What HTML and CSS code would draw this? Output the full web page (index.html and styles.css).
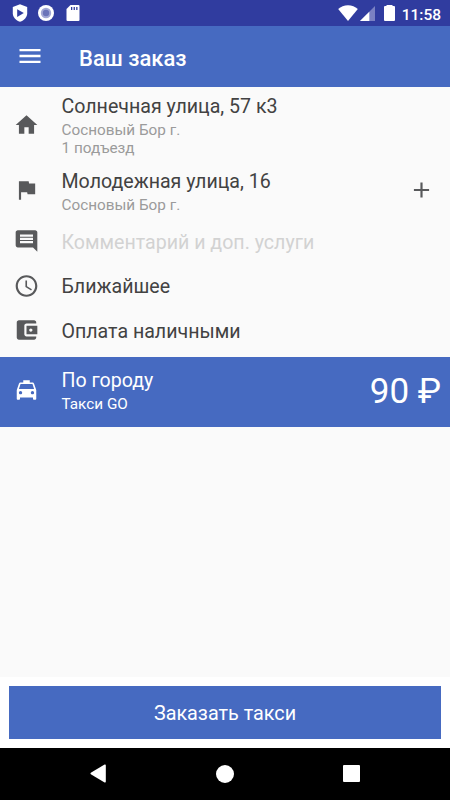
FILE: index.html
```html
<!DOCTYPE html>
<html lang="ru">
<head>
    <meta charset="UTF-8">
    <meta name="viewport" content="width=device-width, initial-scale=1.0">
    <title>Ваш заказ</title>
    <link rel="stylesheet" href="styles.css">
</head>
<body>
    <div class="status-bar">
        <svg class="shield" width="16" height="18" viewBox="0 0 16 18"><path fill="#fff" d="M8 .3l7.200 2.600v6.300c0 4-3 7.200-7.200 8.500C3.800 16.400.8 13.200.8 9.200V2.900z"/><path fill="#303c9f" d="M5.200 5.200v7.800L11.800 9.100z"/></svg>
        <svg class="record" width="16" height="16" viewBox="0 0 16 16"><circle cx="8" cy="8" r="8" fill="#fff"/><circle cx="8" cy="8" r="5.200" fill="#a3a8d5"/><circle cx="8" cy="8" r="3.200" fill="#6b74b9"/></svg>
        <svg class="sd-card" width="14" height="16" viewBox="0 0 14 16"><path fill="#fff" d="M4.500 0H12.500Q13.500 0 13.500 1V15Q13.500 16 12.500 16H1.500Q.5 16 .5 15V4z"/><path fill="#303c9f" d="M5 2h1.300v3H5zM7.600 2h1.300v3H7.600zM10.200 2h1.300v3h-1.300z"/></svg>
        <div class="status-right">
            <svg class="wifi" width="20" height="16" viewBox="0 0 20 16"><path fill="#fff" d="M10 16L.2 4C2.800 1.500 6.200.2 10 .2s7.200 1.300 9.800 3.800z"/></svg>
            <svg class="signal" width="15" height="15" viewBox="0 0 15 15"><path fill="#7a81c3" d="M15 0v15H0z"/><path fill="#fff" d="M9.300 5.700V15H0z"/></svg>
            <svg class="battery" width="11" height="16" viewBox="0 0 11 16"><path fill="#fff" d="M2.500 0h6v1H10q1 0 1 1V15q0 1-1 1H1q-1 0-1-1V2q0-1 1-1h1.500z"/></svg>
            <span class="time">11:58</span>
        </div>
    </div>

    <div class="toolbar">
        <svg class="menu" width="28" height="28" viewBox="0 0 24 24"><path fill="#fff" d="M3 18h18v-2H3v2zm0-5h18v-2H3v2zm0-7v2h18V6H3z"/></svg>
        <h1>Ваш заказ</h1>
    </div>

    <div class="order">
        <div class="row row-from">
            <svg class="icon" viewBox="0 0 24 24"><path d="M10 20v-6h4v6h5v-8h3L12 3 2 12h3v8z"/></svg>
            <div class="text">
                <div class="title">Солнечная улица, 57 к3</div>
                <div class="sub">Сосновый Бор г.</div>
                <div class="sub">1 подъезд</div>
            </div>
        </div>
        <div class="row row-to">
            <svg class="icon" viewBox="0 0 24 24"><path d="M14.400 6L14 4H5v17h2v-7h5.600l.4 2h7V6z"/></svg>
            <div class="text">
                <div class="title">Молодежная улица, 16</div>
                <div class="sub">Сосновый Бор г.</div>
            </div>
            <svg class="icon add" viewBox="0 0 24 24"><path d="M19 13h-6v6h-2v-6H5v-2h6V5h2v6h6v2z"/></svg>
        </div>
        <div class="row row-comment">
            <svg class="icon" viewBox="0 0 24 24"><path d="M21.990 4c0-1.100-.89-2-1.990-2H4c-1.100 0-2 .9-2 2v12c0 1.100.9 2 2 2h14l4 4-.01-18zM18 14H6v-2h12v2zm0-3H6V9h12v2zm0-3H6V6h12v2z"/></svg>
            <div class="text">
                <div class="title hint">Комментарий и доп. услуги</div>
            </div>
        </div>
        <div class="row row-when">
            <svg class="icon" viewBox="0 0 24 24"><path d="M11.990 2C6.470 2 2 6.480 2 12s4.470 10 9.990 10C17.520 22 22 17.520 22 12S17.520 2 11.990 2zM12 20c-4.420 0-8-3.580-8-8s3.580-8 8-8 8 3.580 8 8-3.580 8-8 8zm.5-13H11v6l5.250 3.150.75-1.230-4.500-2.670z"/></svg>
            <div class="text">
                <div class="title">Ближайшее</div>
            </div>
        </div>
        <div class="row row-pay">
            <svg class="icon" viewBox="0 0 24 24"><path d="M21 18v1c0 1.100-.9 2-2 2H5c-1.110 0-2-.9-2-2V5c0-1.100.89-2 2-2h14c1.100 0 2 .9 2 2v1h-9c-1.110 0-2 .9-2 2v8c0 1.100.89 2 2 2h9zm-9-2h10V8H12v8zm4-2.500c-.83 0-1.500-.67-1.500-1.500s.67-1.500 1.500-1.500 1.500.67 1.500 1.500-.67 1.500-1.500 1.500z"/></svg>
            <div class="text">
                <div class="title">Оплата наличными</div>
            </div>
        </div>
        <div class="row row-tariff">
            <svg class="icon" viewBox="0 0 24 24"><path d="M18.920 6.010C18.720 5.420 18.160 5 17.500 5H15V3H9v2H6.500c-.66 0-1.210.42-1.420 1.010L3 12v8c0 .55.45 1 1 1h1c.55 0 1-.45 1-1v-1h12v1c0 .55.45 1 1 1h1c.55 0 1-.45 1-1v-8l-2.080-5.990zM6.500 16c-.83 0-1.500-.67-1.500-1.500S5.670 13 6.500 13s1.500.67 1.500 1.500S7.330 16 6.500 16zm11 0c-.83 0-1.500-.67-1.500-1.500s.67-1.500 1.500-1.500 1.500.67 1.500 1.500-.67 1.500-1.500 1.500zM5 11l1.500-4.500h11L19 11H5z"/></svg>
            <div class="text">
                <div class="title">По городу</div>
                <div class="sub">Такси GO</div>
            </div>
            <div class="price">90 ₽</div>
        </div>
    </div>

    <div class="footer">
        <button class="order-button">Заказать такси</button>
    </div>

    <div class="nav-bar">
        <svg class="nav-back" width="16" height="19" viewBox="0 0 16 19"><path fill="#fff" d="M14.600.6Q15.800 0 15.800 1.400V17.600Q15.800 19 14.600 18.400L.8 10.200Q0 9.500.8 8.800z"/></svg>
        <svg class="nav-home" width="18" height="18" viewBox="0 0 18 18"><circle cx="9" cy="9" r="9" fill="#fff"/></svg>
        <svg class="nav-recent" width="17" height="17" viewBox="0 0 17 17"><rect width="17" height="17" rx="1" fill="#fff"/></svg>
    </div>
</body>
</html>
```

FILE: styles.css
```css
* {
    box-sizing: border-box;
}
body {
    margin: 0;
    height: 800px;
    display: flex;
    flex-direction: column;
    font-family: Roboto, "Noto Sans", sans-serif;
    background-color: #fafafa;
    color: #424242;
    overflow: hidden;
}
svg {
    display: block;
    flex: none;
}
.status-bar {
    height: 26px;
    padding: 0 9px 0 12px;
    display: flex;
    align-items: center;
    background-color: #303c9f;
}
.record {
    margin-left: 10px;
}
.sd-card {
    margin-left: 12px;
}
.status-right {
    margin-left: auto;
    display: flex;
    align-items: center;
}
.signal {
    margin: 1px 0 0 2px;
}
.battery {
    margin-left: 9px;
}
.time {
    margin: 3px 0 0 7px;
    font-size: 15.5px;
    line-height: 20px;
    font-weight: 500;
    color: #fff;
}
.toolbar {
    height: 61px;
    padding-left: 16px;
    display: flex;
    align-items: center;
    background-color: #466ac1;
}
.menu {
    margin-bottom: 1px;
}
h1 {
    margin: 4px 0 0 35px;
    font-size: 22px;
    line-height: 28px;
    font-weight: 500;
    color: #fff;
}
.order {
    flex: 1;
}
.row {
    display: flex;
    align-items: center;
    padding-left: 13px;
}
.row-from {
    height: 75px;
}
.row-to {
    height: 56px;
}
.row-comment {
    height: 45px;
}
.row-comment .text {
    padding-top: 4px;
}
.row-when {
    height: 45px;
}
.row-pay {
    height: 49px;
    padding-bottom: 5px;
}
.icon {
    width: 27px;
    height: 26px;
    fill: #58595b;
}
.add {
    margin-right: 15px;
}
.text {
    flex: 1;
    margin-left: 21.5px;
    padding-top: 2px;
}
.title {
    font-size: 19.6px;
    line-height: 25px;
}
.sub {
    font-size: 15.3px;
    line-height: 18px;
    color: #9b9b9b;
}
.title + .sub {
    margin-top: 2px;
}
.hint {
    color: #d2d2d2;
}
.row-tariff {
    height: 69.5px;
    background-color: #466ac1;
    color: #fff;
}
.row-tariff .icon {
    margin-bottom: 4px;
    fill: #fff;
}
.row-tariff .text {
    padding: 0 0 2px;
}
.row-tariff .sub {
    color: #fff;
}
.price {
    margin-right: 9px;
    font-size: 35px;
    line-height: 40px;
}
.footer {
    height: 70.5px;
    padding: 9px 9px 0;
    background-color: #fff;
}
.order-button {
    display: block;
    width: 100%;
    height: 52.5px;
    padding: 2px 0 0;
    border: none;
    font-family: inherit;
    font-size: 19.8px;
    color: #fff;
    background-color: #466ac1;
}
.nav-bar {
    height: 52.5px;
    display: flex;
    align-items: center;
    padding-left: 90px;
    background-color: #000;
}
.nav-home {
    margin-left: 110px;
}
.nav-recent {
    margin-left: 109px;
}
```
